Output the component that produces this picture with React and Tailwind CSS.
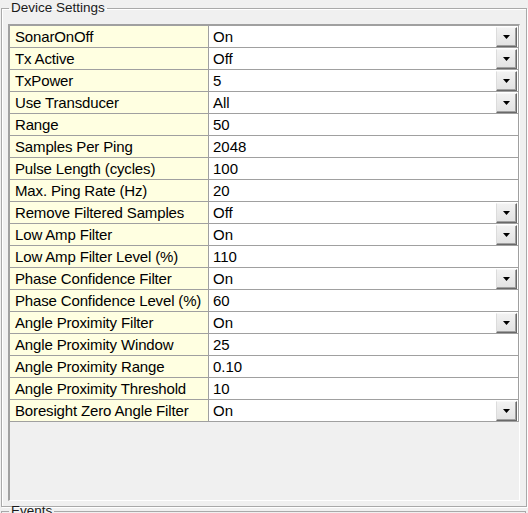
import React from "react";

const rows = [
  { label: "SonarOnOff", value: "On", combo: true },
  { label: "Tx Active", value: "Off", combo: true },
  { label: "TxPower", value: "5", combo: true },
  { label: "Use Transducer", value: "All", combo: true },
  { label: "Range", value: "50" },
  { label: "Samples Per Ping", value: "2048" },
  { label: "Pulse Length (cycles)", value: "100" },
  { label: "Max. Ping Rate (Hz)", value: "20" },
  { label: "Remove Filtered Samples", value: "Off", combo: true },
  { label: "Low Amp Filter", value: "On", combo: true },
  { label: "Low Amp Filter Level (%)", value: "110" },
  { label: "Phase Confidence Filter", value: "On", combo: true },
  { label: "Phase Confidence Level (%)", value: "60" },
  { label: "Angle Proximity Filter", value: "On", combo: true },
  { label: "Angle Proximity Window", value: "25" },
  { label: "Angle Proximity Range", value: "0.10" },
  { label: "Angle Proximity Threshold", value: "10" },
  { label: "Boresight Zero Angle Filter", value: "On", combo: true },
];

function DropButton() {
  return (
    <div className="shrink-0 w-[21px] h-[20px] mr-[1px] flex items-center justify-center bg-gradient-to-b from-[#f2f2f2] to-[#e2e2e2] border-t border-l border-t-[#f8f8f8] border-l-[#dcdcdc] border-r border-b border-r-[#696969] border-b-[#696969] shadow-[inset_-1px_-1px_0_#a0a0a0]">
      <svg width="7" height="4" viewBox="0 0 7 4">
        <path d="M0 0h7L3.5 4z" fill="#000" />
      </svg>
    </div>
  );
}

function PropertyRow({ row }) {
  return (
    <div className="flex h-[22px] border-b border-[#a0a0a0]">
      <div className="w-[199px] shrink-0 bg-[#ffffe1] border-r border-[#a0a0a0] pl-[5px] leading-[21px] whitespace-nowrap tracking-[-0.15px]">
        {row.label}
      </div>
      <div className="flex-1 flex items-center bg-white">
        <span className="flex-1 pl-[4px] leading-[21px]">{row.value}</span>
        {row.combo && <DropButton />}
      </div>
    </div>
  );
}

export default function App() {
  return (
    <div className="w-[528px] h-[513px] overflow-hidden bg-[#f0f0f0] text-black font-['Liberation_Sans',Arial,sans-serif]">
      <fieldset className="ml-[1px] w-[525px] h-[507px] border border-[#a9a9a9] shadow-[1px_1px_0_#fff,inset_1px_1px_0_#fff] px-[6px]">
        <legend className="ml-[1px] px-[2px] text-[13.5px] leading-[16px] text-[#1a1a1a]">
          Device Settings
        </legend>
        <div className="mt-[8px] h-[477px] w-[512px] border-t-2 border-l-2 border-t-[#a0a0a0] border-l-[#a0a0a0] border-r border-b border-r-white border-b-white bg-[#f0f0f0] text-[15px]">
          <div className="border-r border-[#a0a0a0]">
            {rows.map((r) => (
              <PropertyRow key={r.label} row={r} />
            ))}
          </div>
        </div>
      </fieldset>
      <fieldset className="ml-[1px] -mt-[4px] w-[525px] h-[40px] border border-[#a9a9a9] px-[6px]">
        <legend className="ml-[1px] px-[2px] text-[13.5px] leading-[16px] text-[#1a1a1a]">
          Events
        </legend>
      </fieldset>
    </div>
  );
}
